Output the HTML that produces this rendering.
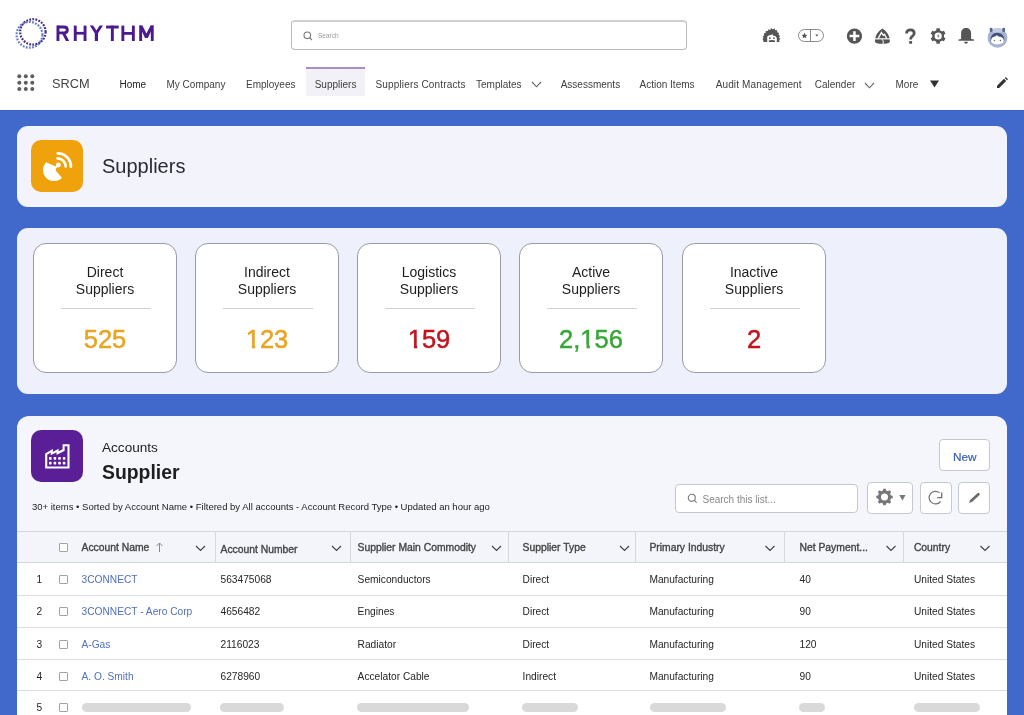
<!DOCTYPE html>
<html><head><meta charset="utf-8">
<style>
*{margin:0;padding:0;box-sizing:border-box}
html,body{width:1024px;height:715px;overflow:hidden;background:#4169cb;font-family:"Liberation Sans",sans-serif;color:#222}
.a{position:absolute;white-space:nowrap}
#hdr{position:absolute;left:0;top:0;width:1024px;height:110px;background:#fff}
.nav{font-size:10px;color:#3e3e3e;line-height:10px}
.card{position:absolute;left:17px;width:990px;border-radius:11px}
.tile{position:absolute;top:243px;width:144px;height:130px;background:#fff;border:1px solid #9a9aa4;border-radius:13px}
.tile .t{position:absolute;left:0;width:100%;text-align:center;font-size:14px;line-height:14px;color:#1e1e1e}
.tile .ln{position:absolute;left:27px;width:90px;top:64px;height:1px;background:#cfcfd6}
.tile .n{position:absolute;left:0;width:100%;text-align:center;font-size:25.5px;line-height:25px;-webkit-text-stroke:0.5px currentColor}
.th{font-size:10.35px;color:#444;line-height:10px;-webkit-text-stroke:0.35px #444}
.td{font-size:10.2px;color:#262626;line-height:10px}
.lk{color:#5271b9}
.rowb{position:absolute;left:17px;width:990px;height:1px;background:#dcdde3}
.vd{position:absolute;top:532px;width:1px;height:31px;background:#d6d8e0}
.cb{position:absolute;left:59px;width:9px;height:9px;border:1px solid #a3a3a3;border-radius:1px;background:#fff}
.sk{position:absolute;top:702.5px;height:9px;border-radius:5px;background:#d9d9d9}
.one{display:inline-block;clip-path:polygon(0 0,100% 0,100% 17.5px,9.4px 17.5px,9.4px 100%,6.2px 100%,6.2px 17.5px,0 17.5px)}
.btn{position:absolute;background:#fff;border:1px solid #c6c8d0;border-radius:4px}
</style></head>
<body><div id="w" style="position:absolute;left:0;top:0;width:1024px;height:715px;will-change:transform">
<div id="hdr"></div>
<div class="a" style="left:0;top:110px;width:1024px;height:1px;background:#3b60bd"></div>

<!-- logo -->
<svg class="a" style="left:0;top:0" width="160" height="60" viewBox="0 0 160 60">
  <circle cx="32.9" cy="31.9" r="12.7" fill="none" stroke="#3f1f7e" stroke-width="2.2" stroke-dasharray="1.8 1.3" opacity="0.95"/>
  <circle cx="29.5" cy="34.8" r="12.9" fill="none" stroke="#5b78c2" stroke-width="2.2" stroke-dasharray="1.8 1.35" opacity="0.95"/>
  <g fill="#4b1b8d">
    <rect x="56.5" y="25.6" width="2.9" height="15.4"/>
    <path d="M57 27.05H64Q67.3 27.05 67.3 30Q67.3 32.9 64 32.9H57" fill="none" stroke="#4b1b8d" stroke-width="2.9"/>
    <path d="M62 33.5H65.3L69.2 41H65.9z"/>
    <rect x="73.8" y="25.6" width="2.9" height="15.4"/><rect x="83.6" y="25.6" width="2.9" height="15.4"/><rect x="75" y="31.9" width="10" height="2.7"/>
    <path d="M89.8 25.6H93.2L96.4 30.4L99.6 25.6H103L98 33.2V41H94.8V33.2z"/>
    <rect x="106.1" y="25.6" width="12.6" height="2.9"/><rect x="110.9" y="25.6" width="2.9" height="15.4"/>
    <rect x="121.4" y="25.6" width="2.9" height="15.4"/><rect x="131.9" y="25.6" width="2.9" height="15.4"/><rect x="123" y="32" width="10" height="2.8"/>
    <rect x="139.2" y="25.6" width="2.9" height="15.4"/><rect x="150.8" y="25.6" width="2.9" height="15.4"/>
    <path d="M139.2 25.6H142.4L146.45 33.4L150.5 25.6H153.7L147.9 38H145z"/>
  </g>
</svg>
<!-- search -->
<div class="a" style="left:291px;top:20px;width:396px;height:30px;border:1px solid #b9b9b9;border-top:2px solid #cfcfcf;border-radius:4px;background:#fff"></div>
<svg class="a" style="left:303px;top:31px" width="10" height="10" viewBox="0 0 10 10"><circle cx="4.3" cy="4.3" r="3.3" fill="none" stroke="#777" stroke-width="1.1"/><path d="M6.8 6.8L9 9" stroke="#777" stroke-width="1.1"/></svg>
<div class="a" style="left:318px;top:32.2px;font-size:6.5px;line-height:7px;color:#999">Search</div>

<!-- header icons -->
<svg class="a" style="left:760px;top:26px" width="250" height="24" viewBox="0 0 250 24">
  <!-- einstein -->
  <path fill="#545454" d="M3.3 14.5L2.5 12.8 3.6 12 2.8 10.2 4.2 9.3 3.8 7.4 5.6 6.9 5.8 5 7.8 5 8.4 3.3 10 4 11.5 1.9 12.8 3.4 14.5 2.2 15.2 4.2 17.2 4.3 17.2 6.3 19 7 18.5 8.8 20 10 19 11.6 20.4 13 19 14 19.8 15.8 18 16 17.5 16H5.5L5 16 3.2 15.8z"/>
  <path fill="#fff" d="M7.2 16V10.5Q8.5 8.8 11 9L12.2 8 13 9.5Q16.2 9.8 16.8 12V16z"/>
  <rect x="9" y="11.4" width="1.5" height="1.6" fill="#545454"/><rect x="13.2" y="11.4" width="1.5" height="1.6" fill="#545454"/>
  <path d="M8.8 16V14.6Q11.8 13.6 15 14.6V16z" fill="#545454"/>
  <!-- star pill -->
  <rect x="38.5" y="3.5" width="25" height="12" rx="6" fill="#fff" stroke="#8a8a8a" stroke-width="1"/>
  <path d="M50.5 3.5v12" stroke="#8a8a8a" stroke-width="1"/>
  <path d="M44.5 6.8l0.9 1.9 2 .2-1.5 1.3.45 2-1.85-1.05-1.85 1.05.45-2-1.5-1.3 2-.2z" fill="#555"/>
  <path d="M55.2 8.5h3.3l-1.65 2z" fill="#555"/>
  <!-- plus -->
  <circle cx="94.45" cy="10.05" r="7.65" fill="#555"/>
  <path d="M94.45 5.2v9.7M89.6 10.05h9.7" stroke="#fff" stroke-width="2.5"/>
  <!-- trailhead -->
  <path d="M122.4 2.4A15.5 15.5 0 0 1 129.9 15.6Q129.6 16.9 128 17.2A30 30 0 0 1 116.8 17.2Q115.2 16.9 114.9 15.6A15.5 15.5 0 0 1 122.4 2.4z" fill="#555"/>
  <path d="M118 12.8L121.4 6.6 123.3 9.3 124.5 8.2 126.8 12.8" fill="none" stroke="#fff" stroke-width="1.3"/>
  <path d="M114.5 12.85h16" stroke="#fff" stroke-width="1.15"/>
  <path d="M122 13.2l1.3 2-.2 2.6" fill="none" stroke="#fff" stroke-width="1"/>
  <!-- help -->
  <path d="M146.6 7.5C146.4 4.6 148.4 3.8 150.4 3.8 152.6 3.8 154.2 5.1 154.2 7.2 154.2 9.6 151.9 10.2 151.1 11.6 150.8 12.2 150.7 12.8 150.7 13.5" fill="none" stroke="#555" stroke-width="2.8"/>
  <rect x="149.2" y="14.9" width="2.9" height="2.9" rx="0.4" fill="#555"/>
  <!-- gear -->
  <path fill="#555" d="M176.27 4.29 L176.47 2.37 L179.73 2.37 L179.93 4.29 L182.13 5.56 L183.89 4.78 L185.52 7.59 L183.96 8.73 L183.96 11.27 L185.52 12.41 L183.89 15.22 L182.13 14.44 L179.93 15.71 L179.73 17.63 L176.47 17.63 L176.27 15.71 L174.07 14.44 L172.31 15.22 L170.68 12.41 L172.24 11.27 L172.24 8.73 L170.68 7.59 L172.31 4.78 L174.07 5.56Z"/>
  <circle cx="178.2" cy="10" r="3.6" fill="#fff"/>
  <path d="M178.9 7.6l-1.9 2.6h1.4l-.7 2.2 1.9-2.7h-1.4z" fill="#555"/>
  <!-- bell -->
  <path d="M201.1 13V7.3C201.1 4 203.2 2 206.1 2 209 2 211.1 4 211.1 7.3V13L214.1 13.6V14.7H198.5V13.6z" fill="#555"/>
  <path d="M204.2 15.8h3.7c0 1.3-.8 2-1.85 2s-1.85-.7-1.85-2z" fill="#555"/>
  <!-- avatar -->
  <circle cx="237.5" cy="11.8" r="9.9" fill="#a7b2d2"/>
  <path d="M231.2 4.2A9.9 9.9 0 0 1 243.8 4.2L241.5 6.5H233.5z" fill="#c3cbe2"/>
  <rect x="229.7" y="1.8" width="2.8" height="4.2" rx="1.2" fill="#57668a"/><rect x="242.3" y="1.8" width="2.8" height="4.2" rx="1.2" fill="#57668a"/>
  <path d="M230.6 15C230.2 9.6 233.2 6.8 237.3 6.8 241.4 6.8 244.6 9.6 244.2 15z" fill="#425177"/>
  <path d="M231 14.6C231 12 233.2 10.6 235.6 10.2L237 9 237.8 10.2C241 10.4 243.8 11.8 243.8 14.6 243.8 17 241.2 18.4 237.4 18.4 233.6 18.4 231 17 231 14.6z" fill="#fff"/>
  <circle cx="234.4" cy="14.6" r="0.75" fill="#8a7080"/><circle cx="240.4" cy="14.6" r="0.75" fill="#556"/>
</svg>
<!-- nav -->
<svg class="a" style="left:17px;top:74px" width="18" height="17" viewBox="0 0 18 17">
  <g fill="#5e5e5e">
    <circle cx="2.3" cy="2.2" r="2"/><circle cx="8.8" cy="2.2" r="2"/><circle cx="15.3" cy="2.2" r="2"/>
    <circle cx="2.3" cy="8.7" r="2"/><circle cx="8.8" cy="8.7" r="2"/><circle cx="15.3" cy="8.7" r="2"/>
    <circle cx="2.3" cy="15.0" r="2"/><circle cx="8.8" cy="15.0" r="2"/><circle cx="15.3" cy="15.0" r="2"/>
  </g>
</svg>
<div class="a" style="left:52px;top:76.5px;font-size:12.8px;line-height:13px;color:#444">SRCM</div>
<div class="a" style="left:306px;top:67px;width:59px;height:29px;background:#f3f1f8;border-top:2px solid #a88fc0"></div>
<div class="a nav" style="left:119.5px;top:79.5px;color:#222">Home</div>
<div class="a nav" style="left:166.5px;top:79.5px">My Company</div>
<div class="a nav" style="left:246px;top:79.5px">Employees</div>
<div class="a nav" style="left:314.7px;top:79.5px">Suppliers</div>
<div class="a nav" style="left:375.5px;top:79.5px;letter-spacing:0.15px">Suppliers Contracts</div>
<div class="a nav" style="left:476px;top:79.5px">Templates</div>
<svg class="a" style="left:531px;top:81px" width="12" height="7" viewBox="0 0 12 7"><path d="M1 1l4.5 4.8 4.5-4.8" fill="none" stroke="#666" stroke-width="1.1"/></svg>
<div class="a nav" style="left:560.7px;top:79.5px">Assessments</div>
<div class="a nav" style="left:639.5px;top:79.5px">Action Items</div>
<div class="a nav" style="left:715.7px;top:79.5px;letter-spacing:0.13px">Audit Management</div>
<div class="a nav" style="left:814.7px;top:79.5px">Calender</div>
<svg class="a" style="left:864px;top:82px" width="12" height="7" viewBox="0 0 12 7"><path d="M1 1l4.5 4.8 4.5-4.8" fill="none" stroke="#666" stroke-width="1.1"/></svg>
<div class="a nav" style="left:895.5px;top:79.5px">More</div>
<svg class="a" style="left:930px;top:80px" width="9" height="8" viewBox="0 0 9 8"><path d="M0 .5h9L4.5 7.5z" fill="#333"/></svg>
<svg class="a" style="left:996px;top:77px" width="12" height="12" viewBox="0 0 12 12"><path d="M1 8.8L8 1.8l2.2 2.2-7 7H1z" fill="#333"/><path d="M8.8 1l1-1 2.2 2.2-1 1z" fill="#333"/></svg>

<!-- card 1 -->
<div class="card" style="top:126px;height:81px;background:#f2f3fb"></div>
<div class="a" style="left:31px;top:140px;width:52px;height:52px;border-radius:10px;background:#f0a20c"></div>
<svg class="a" style="left:31px;top:140px" width="52" height="52" viewBox="0 0 52 52">
  <path d="M15.2 22.3A11 11 0 0 0 31 37.8L25.3 31.3 23.5 26z" fill="#fff"/>
  <circle cx="27.4" cy="25" r="2.4" fill="#fff"/>
  <path d="M27 25L22 30" stroke="#fff" stroke-width="2"/>
  <path d="M26.5 18.4A8.1 8.1 0 0 1 34.6 26.5" fill="none" stroke="#fff" stroke-width="2.6" stroke-linecap="round"/>
  <path d="M26.8 13.4A13.1 13.1 0 0 1 39.9 26.5" fill="none" stroke="#fff" stroke-width="2.8" stroke-linecap="round"/>
</svg>
<div class="a" style="left:102px;top:155.8px;font-size:20px;line-height:20px;color:#2b2b35">Suppliers</div>

<!-- card 2 -->
<div class="card" style="top:228px;height:166px;background:#eef1fb"></div>
<div class="tile" style="left:33px"><div class="t" style="top:21.3px">Direct</div><div class="t" style="top:37.8px">Suppliers</div><div class="ln"></div><div class="n" style="top:83px;color:#e9a423">525</div></div>
<div class="tile" style="left:195px"><div class="t" style="top:21.3px">Indirect</div><div class="t" style="top:37.8px">Suppliers</div><div class="ln"></div><div class="n" style="top:83px;color:#e9a423"><span class="one">1</span>23</div></div>
<div class="tile" style="left:357px"><div class="t" style="top:21.3px">Logistics</div><div class="t" style="top:37.8px">Suppliers</div><div class="ln"></div><div class="n" style="top:83px;color:#c0141e"><span class="one">1</span>59</div></div>
<div class="tile" style="left:519px"><div class="t" style="top:21.3px">Active</div><div class="t" style="top:37.8px">Suppliers</div><div class="ln"></div><div class="n" style="top:83px;color:#3aa63a">2,<span class="one">1</span>56</div></div>
<div class="tile" style="left:682px"><div class="t" style="top:21.3px">Inactive</div><div class="t" style="top:37.8px">Suppliers</div><div class="ln"></div><div class="n" style="top:83px;color:#c0141e">2</div></div>

<!-- card 3 -->
<div class="card" style="top:416px;height:320px;background:#f4f6fc;border-radius:12px"></div>
<div class="a" style="left:31px;top:430px;width:52px;height:52px;border-radius:10px;background:#5a1e96"></div>
<svg class="a" style="left:31px;top:430px" width="52" height="52" viewBox="0 0 52 52">
  <path d="M15.2 37.5V24L20.8 20.8V23.6L26.6 20.6V23.2L32.6 20V15.2H37.5V37.5z" fill="none" stroke="#fff" stroke-width="2.1"/>
  <g fill="#fff"><rect x="18.0" y="27.1" width="2.6" height="2.6" rx="0.6"/><rect x="22.6" y="27.1" width="2.6" height="2.6" rx="0.6"/><rect x="27.2" y="27.1" width="2.6" height="2.6" rx="0.6"/><rect x="31.8" y="27.1" width="2.6" height="2.6" rx="0.6"/><rect x="18.0" y="31.8" width="2.6" height="2.6" rx="0.6"/><rect x="22.6" y="31.8" width="2.6" height="2.6" rx="0.6"/><rect x="27.2" y="31.8" width="2.6" height="2.6" rx="0.6"/><rect x="31.8" y="31.8" width="2.6" height="2.6" rx="0.6"/></g>
</svg>
<div class="a" style="left:102px;top:440.7px;font-size:13.6px;line-height:14px;color:#222">Accounts</div>
<div class="a" style="left:102px;top:463px;font-size:19.4px;line-height:19px;font-weight:bold;color:#1e1e1e">Supplier</div>
<div class="a" style="left:32px;top:501.5px;font-size:9.5px;line-height:10px;color:#222">30+ items • Sorted by Account Name • Filtered by All accounts - Account Record Type • Updated an hour ago</div>

<div class="btn" style="left:939px;top:439px;width:51px;height:32px"></div>
<div class="a" style="left:953px;top:450.5px;font-size:11.8px;line-height:12px;color:#3b5fb5;-webkit-text-stroke:0.2px #3b5fb5">New</div>
<div class="btn" style="left:675px;top:484px;width:183px;height:29px"></div>
<svg class="a" style="left:687px;top:493px" width="11" height="11" viewBox="0 0 11 11"><circle cx="4.8" cy="4.8" r="3.5" fill="none" stroke="#777" stroke-width="1.1"/><path d="M7.4 7.4L9.6 9.6" stroke="#777" stroke-width="1.1"/></svg>
<div class="a" style="left:702.5px;top:495px;font-size:10px;line-height:10px;color:#8a8a8a">Search this list...</div>
<div class="btn" style="left:867px;top:482px;width:46px;height:32px"></div>
<svg class="a" style="left:875px;top:488px" width="32" height="18" viewBox="0 0 32 18">
  <path fill="#777" d="M7.93 2.59 L8.26 0.79 L10.74 0.79 L11.07 2.59 L12.92 3.36 L14.43 2.32 L16.18 4.07 L15.14 5.58 L15.91 7.43 L17.71 7.76 L17.71 10.24 L15.91 10.57 L15.14 12.42 L16.18 13.93 L14.43 15.68 L12.92 14.64 L11.07 15.41 L10.74 17.21 L8.26 17.21 L7.93 15.41 L6.08 14.64 L4.57 15.68 L2.82 13.93 L3.86 12.42 L3.09 10.57 L1.29 10.24 L1.29 7.76 L3.09 7.43 L3.86 5.58 L2.82 4.07 L4.57 2.32 L6.08 3.36Z" transform="translate(0,0)"/>
  <circle cx="9.5" cy="9" r="3.5" fill="#fff"/>
  <path d="M24.3 7h6.3l-3.15 5.5z" fill="#777"/>
</svg>
<div class="btn" style="left:920px;top:482px;width:32px;height:32px"></div>
<svg class="a" style="left:926px;top:488px" width="20" height="20" viewBox="0 0 20 20"><path d="M14.56 13.3A6.3 6.3 0 1 1 13.6 4.9" fill="none" stroke="#6e6e6e" stroke-width="1.15"/><path d="M15.7 4.6V9.6H11.3" fill="none" stroke="#6e6e6e" stroke-width="1.3"/></svg>
<div class="btn" style="left:958px;top:482px;width:32px;height:32px"></div>
<svg class="a" style="left:968px;top:492px" width="13" height="13" viewBox="0 0 13 13"><path d="M3.6 8.4L10.4 2.3" stroke="#6a6a6a" stroke-width="2.7" stroke-linecap="round"/><path d="M2.3 7.5L4.4 9.7 1.2 10.9z" fill="#6a6a6a"/></svg>
<!-- table -->
<div class="a" style="left:17px;top:531px;width:990px;height:32px;background:#f3f5fb;border-top:1px solid #d4d6de;border-bottom:1px solid #d4d6de"></div>
<div class="a" style="left:17px;top:563px;width:990px;height:160px;background:#fff"></div>
<div class="rowb" style="top:595px"></div>
<div class="rowb" style="top:627px"></div>
<div class="rowb" style="top:659px"></div>
<div class="rowb" style="top:690px"></div>
<div class="vd" style="left:215px"></div>
<div class="vd" style="left:350px"></div>
<div class="vd" style="left:508px"></div>
<div class="vd" style="left:635px"></div>
<div class="vd" style="left:784px"></div>
<div class="vd" style="left:903px"></div>

<div class="cb" style="top:543px"></div>
<div class="a th" style="left:81.5px;top:543px">Account Name</div>
<svg class="a" style="left:155px;top:542px" width="9" height="10" viewBox="0 0 9 10"><path d="M4.5 1v9M1.5 4l3-3 3 3" fill="none" stroke="#888" stroke-width="1"/></svg>
<div class="a th" style="left:220.5px;top:544.5px">Account Number</div>
<div class="a th" style="left:357.6px;top:543px">Supplier Main Commodity</div>
<div class="a th" style="left:522.6px;top:542.5px">Supplier Type</div>
<div class="a th" style="left:649.4px;top:543px">Primary Industry</div>
<div class="a th" style="left:799.5px;top:543px">Net Payment...</div>
<div class="a th" style="left:913.9px;top:543px">Country</div>
<svg class="a" style="left:0;top:544px" width="1024" height="8" viewBox="0 0 1024 8">
  <g fill="none" stroke="#444" stroke-width="1.2">
    <path d="M196 2l4.5 4.5 4.5-4.5"/><path d="M332 2l4.5 4.5 4.5-4.5"/><path d="M492 2l4.5 4.5 4.5-4.5"/>
    <path d="M620 2l4.5 4.5 4.5-4.5"/><path d="M765.5 2l4.5 4.5 4.5-4.5"/><path d="M886.5 2l4.5 4.5 4.5-4.5"/><path d="M980.5 2l4.5 4.5 4.5-4.5"/>
  </g>
</svg>

<!-- rows -->
<div class="a td" style="left:36.5px;top:575px">1</div>
<div class="cb" style="top:575px"></div>
<div class="a td lk" style="left:81.5px;top:575px">3CONNECT</div>
<div class="a td" style="left:220.5px;top:575px">563475068</div>
<div class="a td" style="left:357.6px;top:575px">Semiconductors</div>
<div class="a td" style="left:522.6px;top:575px">Direct</div>
<div class="a td" style="left:649.4px;top:575px">Manufacturing</div>
<div class="a td" style="left:799.5px;top:575px">40</div>
<div class="a td" style="left:913.9px;top:575px">United States</div>

<div class="a td" style="left:36.5px;top:607px">2</div>
<div class="cb" style="top:607px"></div>
<div class="a td lk" style="left:81.5px;top:607px">3CONNECT - Aero Corp</div>
<div class="a td" style="left:220.5px;top:607px">4656482</div>
<div class="a td" style="left:357.6px;top:607px">Engines</div>
<div class="a td" style="left:522.6px;top:607px">Direct</div>
<div class="a td" style="left:649.4px;top:607px">Manufacturing</div>
<div class="a td" style="left:799.5px;top:607px">90</div>
<div class="a td" style="left:913.9px;top:607px">United States</div>

<div class="a td" style="left:36.5px;top:640px">3</div>
<div class="cb" style="top:640px"></div>
<div class="a td lk" style="left:81.5px;top:640px">A-Gas</div>
<div class="a td" style="left:220.5px;top:640px">2116023</div>
<div class="a td" style="left:357.6px;top:640px">Radiator</div>
<div class="a td" style="left:522.6px;top:640px">Direct</div>
<div class="a td" style="left:649.4px;top:640px">Manufacturing</div>
<div class="a td" style="left:799.5px;top:640px">120</div>
<div class="a td" style="left:913.9px;top:640px">United States</div>

<div class="a td" style="left:36.5px;top:672px">4</div>
<div class="cb" style="top:672px"></div>
<div class="a td lk" style="left:81.5px;top:672px">A. O. Smith</div>
<div class="a td" style="left:220.5px;top:672px">6278960</div>
<div class="a td" style="left:357.6px;top:672px">Accelator Cable</div>
<div class="a td" style="left:522.6px;top:672px">Indirect</div>
<div class="a td" style="left:649.4px;top:672px">Manufacturing</div>
<div class="a td" style="left:799.5px;top:672px">90</div>
<div class="a td" style="left:913.9px;top:672px">United States</div>

<div class="a td" style="left:36.5px;top:703px">5</div>
<div class="cb" style="top:703px"></div>
<div class="sk" style="left:81.5px;width:109.5px"></div>
<div class="sk" style="left:220.3px;width:63.7px"></div>
<div class="sk" style="left:357.4px;width:111.4px"></div>
<div class="sk" style="left:522.3px;width:55.8px"></div>
<div class="sk" style="left:649.7px;width:76.6px"></div>
<div class="sk" style="left:798.8px;width:26px"></div>
<div class="sk" style="left:913.9px;width:66.2px"></div>
</div></body></html>
